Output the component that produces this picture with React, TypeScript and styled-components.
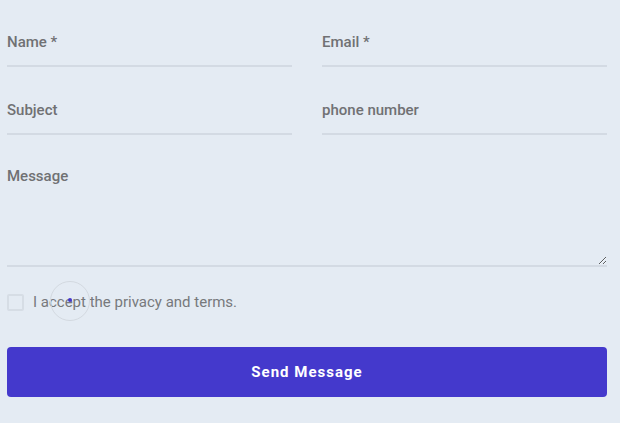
import React from "react";
import styled, { createGlobalStyle } from "styled-components";

const GlobalStyle = createGlobalStyle`
    html, body {
        margin: 0;
        padding: 0;
        background: #e4ebf3;
    }
    body {
        font-family: Roboto, "Liberation Sans", sans-serif;
    }
`;

const App = () => {
    return (
        <>
            <GlobalStyle />
            <Form onSubmit={(e) => e.preventDefault()}>
                <Grid>
                    <Field placeholder="Name *" />
                    <Field placeholder="Email *" />
                    <Field placeholder="Subject" />
                    <Field placeholder="phone number" />
                </Grid>
                <MessageArea placeholder="Message" />
                <Agree>
                    <Box type="checkbox" />
                    <AgreeText>I accept the privacy and terms.</AgreeText>
                    <Ripple>
                        <Dot />
                    </Ripple>
                </Agree>
                <SendButton type="submit">Send Message</SendButton>
            </Form>
        </>
    );
};

const Form = styled.form`
    display: flex;
    flex-direction: column;
    padding: 21px 13px 26px 7px;
`;

const Grid = styled.div`
    display: grid;
    grid-template-columns: 1fr 1fr;
    column-gap: 30px;
    row-gap: 22px;
`;

const Field = styled.input`
    box-sizing: border-box;
    width: 100%;
    height: 46px;
    padding: 0 0 2px;
    border: none;
    border-bottom: 2px solid #d3dae3;
    background: transparent;
    font-family: Roboto, "Liberation Sans", sans-serif;
    font-size: 15px;
    font-weight: 500;
    color: #6e6e6e;
    outline: none;
    &::placeholder {
        color: #707173;
        opacity: 1;
    }
`;

const MessageArea = styled.textarea`
    box-sizing: border-box;
    margin-top: 22px;
    width: 100%;
    height: 110px;
    padding: 9px 0 0;
    border: none;
    border-bottom: 2px solid #d3dae3;
    background: transparent;
    font-family: Roboto, "Liberation Sans", sans-serif;
    font-size: 15px;
    font-weight: 500;
    line-height: 20px;
    color: #6e6e6e;
    outline: none;
    resize: vertical;
    &::placeholder {
        color: #707173;
        opacity: 1;
    }
`;

const Agree = styled.label`
    position: relative;
    display: flex;
    align-items: center;
    gap: 9px;
    margin-top: 26px;
    height: 18px;
`;

const Box = styled.input`
    appearance: none;
    box-sizing: border-box;
    margin: 0;
    width: 17px;
    height: 17px;
    border: 2px solid #d6dde5;
    border-radius: 2px;
    background: transparent;
`;

const AgreeText = styled.span`
    font-size: 15px;
    color: #77797c;
`;

const Ripple = styled.span`
    position: absolute;
    left: 43px;
    top: -12px;
    width: 40px;
    height: 40px;
    box-sizing: border-box;
    border: 1px solid #d3d9e0;
    border-radius: 50%;
    display: flex;
    align-items: center;
    justify-content: center;
    pointer-events: none;
`;

const Dot = styled.span`
    width: 4px;
    height: 4px;
    margin-top: -3px;
    border-radius: 50%;
    background: #4438cb;
`;

const SendButton = styled.button`
    margin-top: 36px;
    height: 50px;
    width: 100%;
    border: none;
    border-radius: 4px;
    background: #4439cc;
    color: #ffffff;
    font-family: Roboto, "Liberation Sans", sans-serif;
    font-size: 15px;
    font-weight: 700;
    letter-spacing: 1px;
    cursor: pointer;
`;

export default App;
